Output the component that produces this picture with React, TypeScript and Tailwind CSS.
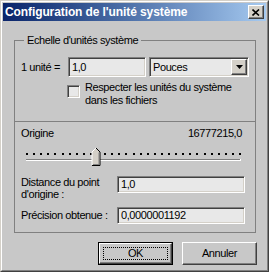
const sunken =
  "border border-t-[#808080] border-l-[#808080] border-b-white border-r-white shadow-[inset_1px_1px_0_#404040,inset_-1px_-1px_0_#d4d0c8]";
const raised =
  "border border-t-white border-l-white border-b-[#404040] border-r-[#404040] shadow-[inset_-1px_-1px_0_#808080]";

const Slider = () => {
  const dots = Array.from({ length: 31 }, (_, i) => Math.round(i * 7.1));
  return (
    <svg width="215" height="18" viewBox="0 0 215 18">
      {dots.map((x) => (
        <rect key={x} x={x} y={5} width={2} height={2} fill="#000" />
      ))}
      <rect x={0} y={11} width={215} height={1} fill="#808080" />
      <rect x={0} y={12} width={215} height={1} fill="#fff" />
      <rect x={214} y={11} width={1} height={2} fill="#fff" />
      {/* thumb */}
      <polygon points="66,4 70,0 74,4 74,17 66,17" fill="#d4d0c8" />
      <polyline points="66,17 66,4 70,0" fill="none" stroke="#fff" strokeWidth="1" />
      <polyline points="70,0 74,4 74,17.5 66,17.5" fill="none" stroke="#000" strokeWidth="1" />
      <polyline points="73,4.5 73,16.5 67,16.5" fill="none" stroke="#808080" strokeWidth="1" />
    </svg>
  );
};

export default function App() {
  return (
    <div
      className="w-[269px] h-[272px] border border-t-[#d4d0c8] border-l-[#d4d0c8] border-b-[#404040] border-r-[#404040] text-[11px] leading-[13px] text-black tracking-[-0.4px]"
      style={{ fontFamily: '"Liberation Sans", Arial, sans-serif' }}
    >
      <div className="h-full border border-t-white border-l-white border-b-[#808080] border-r-[#808080] bg-[#c8c8c8] p-px flex flex-col">
        {/* title bar */}
        <div className="h-[18px] flex items-center justify-between bg-gradient-to-r from-[#0a246a] to-[#a6caf0] pl-[2px] pr-[2px]">
          <span className="text-white font-bold text-[12px] tracking-[-0.1px]">
            Configuration de l'unité système
          </span>
          <div className={`w-[16px] h-[14px] bg-[#d4d0c8] flex items-center justify-center ${raised}`}>
            <svg width="8" height="7" viewBox="0 0 8 7">
              <path d="M0.5 0.5 L7 6.5 M7 0.5 L0.5 6.5" stroke="#000" strokeWidth="1.6" />
            </svg>
          </div>
        </div>

        {/* group box */}
        <fieldset className="ml-[11px] mt-[13px] w-[242px] h-[199px] border border-[#808080]">
          <legend className="ml-[9px] px-[3px] leading-[13px]">Echelle d'unités système</legend>

          <div className="mt-[10px] flex items-center h-[20px] pl-[6px]">
            <span className="w-[47px]">1 unité =</span>
            <div className={`w-[78px] h-[20px] bg-[#e8e8e8] flex items-center pl-[3px] ${sunken}`}>1,0</div>
            <div className={`ml-[3px] w-[100px] h-[20px] bg-[#e8e8e8] flex items-center justify-between pl-[3px] pr-px ${sunken}`}>
              <span>Pouces</span>
              <div className={`w-[16px] h-[16px] bg-[#d4d0c8] flex items-center justify-center ${raised}`}>
                <svg width="7" height="4" viewBox="0 0 7 4">
                  <path d="M0 0 H7 L3.5 4 Z" fill="#000" />
                </svg>
              </div>
            </div>
          </div>

          <div className="mt-[4px] flex items-start pl-[52px]">
            <div className={`mt-[4px] w-[13px] h-[13px] shrink-0 bg-[#e8e8e8] ${sunken}`} />
            <span className="ml-[5px] leading-[13px]">
              Respecter les unités du système
              <br />
              dans les fichiers
            </span>
          </div>

          <div className="mt-[14px] border-t border-[#808080]" />

          <div className="mt-[5px] flex justify-between pl-[6px] pr-[13px]">
            <span>Origine</span>
            <span>16777215,0</span>
          </div>

          <div className="mt-[8px] pl-[11px] h-[18px]">
            <Slider />
          </div>

          <div className="mt-[10px] flex items-start pl-[6px]">
            <span className="w-[96px] leading-[12px]">
              Distance du point
              <br />
              d'origine :
            </span>
            <div className={`w-[128px] h-[17px] bg-[#e8e8e8] flex items-center pl-[3px] ${sunken}`}>1,0</div>
          </div>

          <div className="mt-[7px] flex items-center pl-[6px]">
            <span className="w-[96px]">Précision obtenue :</span>
            <div className={`w-[128px] h-[17px] bg-[#e8e8e8] flex items-center pl-[3px] ${sunken}`}>0,0000001192</div>
          </div>
        </fieldset>

        {/* buttons */}
        <div className="mt-[9px] flex justify-end gap-[9px] pr-[9px]">
          <div className="w-[75px] h-[23px] border border-black">
            <div className={`w-full h-full bg-[#c8c8c8] p-[3px] ${raised}`}>
              <div className="w-full h-full border border-dotted border-black flex items-center justify-center">OK</div>
            </div>
          </div>
          <div className={`w-[75px] h-[23px] bg-[#c8c8c8] flex items-center justify-center ${raised}`}>Annuler</div>
        </div>
      </div>
    </div>
  );
}
